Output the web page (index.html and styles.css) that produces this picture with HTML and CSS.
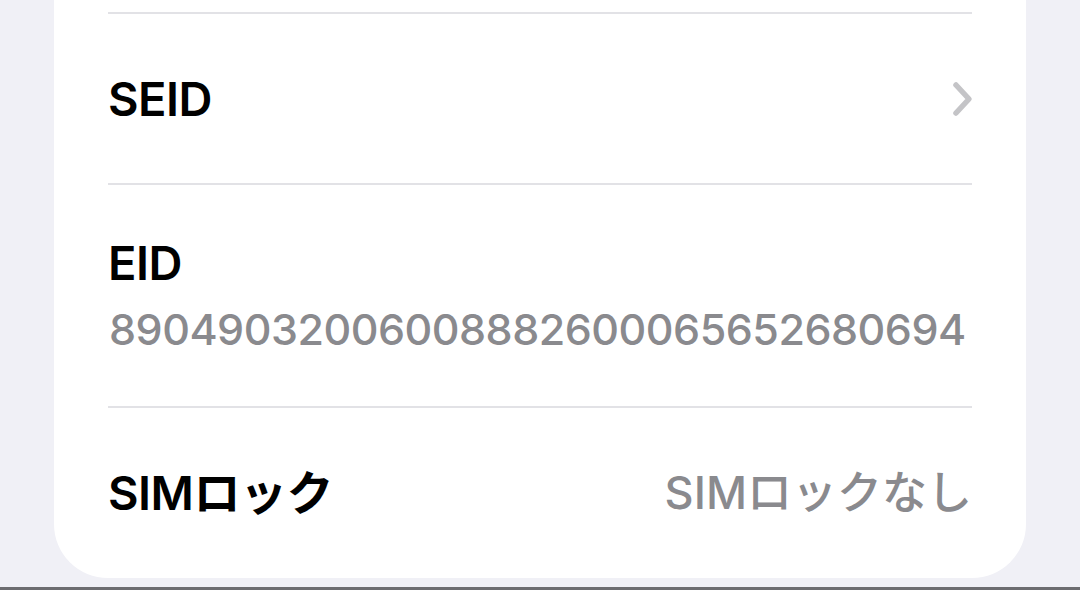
FILE: index.html
```html
<!DOCTYPE html>
<html lang="ja">
<head>
    <meta charset="UTF-8">
    <meta name="viewport" content="width=device-width, initial-scale=1.0">
    <title>情報</title>
    <link rel="stylesheet" href="styles.css">
</head>
<body>

    <div class="screen">
        <div class="group">
            <!-- 上の行の下端だけ見えている -->
            <div class="row-tail"></div>

            <div class="row row-link">
                <span class="label">SEID</span>
                <svg class="chevron" width="22" height="36" viewBox="0 0 22 36">
                    <path d="M4 4 L17 18 L4 32" fill="none" stroke="#c4c4c7" stroke-width="5.5" stroke-linecap="round" stroke-linejoin="round"/>
                </svg>
            </div>

            <div class="row row-stack">
                <span class="label">EID</span>
                <span class="value value-number">89049032006008882600065652680694</span>
            </div>

            <div class="row row-last">
                <span class="label">SIMロック</span>
                <span class="value">SIMロックなし</span>
            </div>
        </div>
    </div>
    <div class="bottom-edge"></div>

</body>
</html>
```

FILE: styles.css
```css
body {
    margin: 0;
    height: 590px;
    overflow: hidden;
    display: flex;
    flex-direction: column;
    background-color: #f0f0f6; /* グループ背景 */
    font-family: "Inter", "Noto Sans CJK JP", sans-serif;
    color: #000;
}

.screen {
    flex: 1;
    padding: 0 54px;
}

.group {
    background-color: #fff;
    border-radius: 0 0 54px 54px;
    padding: 0 54px;
}

.row-tail {
    height: 12px;
}

.row {
    border-top: 2px solid #e2e2e6; /* 区切り線 */
    display: flex;
    align-items: center;
    justify-content: space-between;
}

.row-link {
    height: 169px;
}

.row-stack {
    height: 221px;
    flex-direction: column;
    align-items: flex-start;
    justify-content: center;
    gap: 10px;
}

.row-last {
    height: 170px;
}

.label {
    font-size: 47px;
    font-weight: 600;
    line-height: 56px;
    letter-spacing: -0.5px;
}

.value {
    font-size: 45px;
    font-weight: 500;
    line-height: 56px;
    color: #8a8a8e;
}

.value-number {
    font-size: 43px;
    letter-spacing: -0.5px;
    padding-left: 1px;
}

.chevron {
    display: block;
    margin-right: -2px;
}

.bottom-edge {
    height: 3px;
    background-color: #6c6c70;
    margin-top: 9px;
}
```
